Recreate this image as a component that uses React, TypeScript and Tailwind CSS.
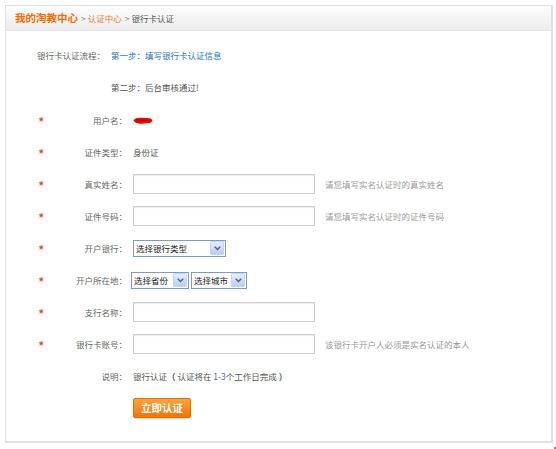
const FONT = { fontFamily: '"Noto Sans CJK SC", "Noto Sans", sans-serif' };

function Star() {
  return <span className="ml-[32px] mt-[4px] w-[9px] text-[14px] leading-none text-[#ff2a2a]">*</span>;
}

function Row({ label, star = true, children }: { label: string; star?: boolean; children?: React.ReactNode }) {
  return (
    <div className="flex h-[32px] items-center">
      <div className="flex w-[121px] items-center">
        {star ? <Star /> : <span className="ml-[32px] w-[9px]" />}
        <span className="flex-1 text-right text-[#666]">{label}</span>
      </div>
      <div className="ml-[6px] flex items-center">{children}</div>
    </div>
  );
}

function TextInput() {
  return (
    <div className="h-[20px] w-[182px] border border-[#cfcfcf] bg-white shadow-[inset_0_1px_1px_rgba(0,0,0,0.08)]" />
  );
}

function Hint({ children }: { children: React.ReactNode }) {
  return <span className="ml-[10px] text-[#999]">{children}</span>;
}

function Select({ text, width }: { text: string; width: string }) {
  return (
    <div className={`flex h-[17px] items-center justify-between border border-[#7f9db9] bg-white pl-[2px] pr-[1px] ${width}`}>
      <span className="text-[#222]">{text}</span>
      <span className="flex h-[14px] w-[14px] items-center justify-center rounded-[1px] border border-[#c3d3fd] bg-gradient-to-b from-[#e6eefc] to-[#b9cdf7]">
        <svg width="7" height="5" viewBox="0 0 7 5">
          <path d="M0.8 0.8 L3.5 3.6 L6.2 0.8" fill="none" stroke="#4d6185" strokeWidth="1.4" />
        </svg>
      </span>
    </div>
  );
}

export default function App() {
  return (
    <div className="relative h-[449px] w-[556px] bg-white text-[8.5px] leading-none" style={FONT}>
      <div className="absolute left-[554px] top-[442px] h-[2px] w-[2px] bg-[#888]" />
      <div className="ml-[5px] mt-[5px] h-[438px] w-[548px] border border-[#e0e0e0] border-r-2 border-b-2">
        <div className="flex h-[25px] items-center border-b border-[#e6e6e6] bg-gradient-to-b from-[#fdfdfd] to-[#ececec] pl-[9px]">
          <span className="text-[10.5px] font-bold text-[#ff6a00]">我的淘教中心</span>
          <span className="ml-[3px] text-[#888]">&gt;</span>
          <span className="ml-[2px] text-[#f07a2a]">认证中心</span>
          <span className="ml-[3px] text-[#888]">&gt;</span>
          <span className="ml-[2px] text-[#555]">银行卡认证</span>
        </div>

        <div className="pt-[8px]">
          <div className="flex h-[32px] items-center">
            <span className="w-[99px] text-right text-[#666]">银行卡认证流程：</span>
            <span className="ml-[6px] text-[#2a72c8]">第一步：填写银行卡认证信息</span>
          </div>
          <div className="flex h-[33px] items-center">
            <span className="ml-[105px] text-[#555]">第二步：后台审核通过!</span>
          </div>

          <Row label="用户名：">
            <svg width="20" height="9" viewBox="0 0 20 9">
              <path d="M0.5 4.5 C2 1, 8 1.5, 12 2 C15 2, 18.5 2, 19.5 4.5 C18.5 7.5, 14 7, 11 7.5 C7 8, 2.5 8, 0.5 4.5 Z" fill="#ee0000" />
              <path d="M3 3.5 L17 5" stroke="#b00000" strokeWidth="0.8" />
            </svg>
          </Row>
          <Row label="证件类型：">
            <span className="text-[#555]">身份证</span>
          </Row>
          <Row label="真实姓名：">
            <TextInput />
            <Hint>请您填写实名认证时的真实姓名</Hint>
          </Row>
          <Row label="证件号码：">
            <TextInput />
            <Hint>请您填写实名认证时的证件号码</Hint>
          </Row>
          <Row label="开户银行：">
            <Select text="选择银行类型" width="w-[93px]" />
          </Row>
          <Row label="开户所在地：">
            <div className="-ml-[2px] flex gap-[2px]">
              <Select text="选择省份" width="w-[58px]" />
              <Select text="选择城市" width="w-[56px]" />
            </div>
          </Row>
          <Row label="支行名称：">
            <TextInput />
          </Row>
          <Row label="银行卡账号：">
            <TextInput />
            <Hint>该银行卡开户人必须是实名认证的本人</Hint>
          </Row>
          <Row label="说明：" star={false}>
            <span className="text-[#555]">
              银行认证<span className="font-bold">（</span> 认证将在 <span className="text-[#4a6ea8]">1-3</span>个工作日完成 <span className="font-bold">）</span>
            </span>
          </Row>

          <div className="ml-[127px] mt-[6px]">
            <button className="flex h-[20px] w-[58px] items-center justify-center rounded-[2px] border border-[#e57000] bg-gradient-to-b from-[#ffa53a] to-[#f27300] text-[10.5px] font-bold text-white shadow-[0_1px_1px_rgba(0,0,0,0.15)]">
              立即认证
            </button>
          </div>
        </div>
      </div>
    </div>
  );
}
